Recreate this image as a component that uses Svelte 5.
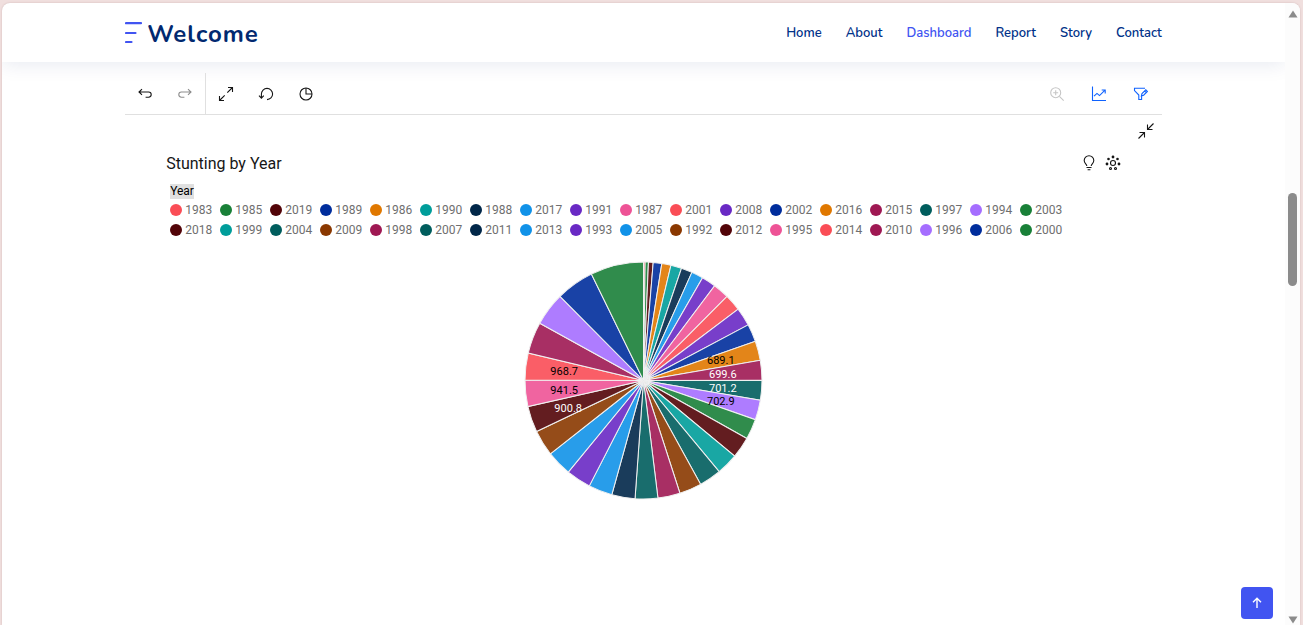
<script>
  const links = ['Home', 'About', 'Dashboard', 'Report', 'Story', 'Contact'];

  const coral = '#fa4d56';
  const green = '#198038';
  const maroon = '#520408';
  const navy = '#002d9c';
  const orange = '#e07800';
  const teal = '#009d9a';
  const ink = '#012749';
  const sky = '#1192e8';
  const purple = '#6929c4';
  const pink = '#ee5396';
  const magenta = '#9f1853';
  const pine = '#005d5d';
  const lilac = '#a56eff';
  const brown = '#8a3800';

  // year, colour, angle in degrees at which the slice ends (clockwise from the top)
  const slices = [
    ['1983', coral, 0.8], ['1985', green, 2.4], ['2019', maroon, 4.7], ['1989', navy, 8.9],
    ['1986', orange, 13.4], ['1990', teal, 18.7], ['1988', ink, 24.1], ['2017', sky, 29.9],
    ['1991', purple, 36.9], ['1987', pink, 44.8], ['2001', coral, 53], ['2008', purple, 62],
    ['2002', navy, 70.7], ['2016', orange, 80.2], ['2015', magenta, 89.9], ['1997', pine, 99.6],
    ['1994', lilac, 109.3], ['2003', green, 119.3], ['2018', maroon, 129.7], ['1999', teal, 140.3],
    ['2004', pine, 151.2], ['2009', brown, 162.1], ['1998', magenta, 173], ['2007', pine, 184.1],
    ['2011', ink, 195.5], ['2013', sky, 207.2], ['1993', purple, 219.4], ['2005', sky, 231.8],
    ['1992', brown, 244.5], ['2012', maroon, 257.3], ['1995', pink, 270.2], ['2014', coral, 283.4],
    ['2010', magenta, 298.9], ['1996', lilac, 315.2], ['2006', navy, 333.9], ['2000', green, 360]
  ];

  const labels = [
    { text: '689.1', x: 77, y: -16, dark: true },
    { text: '699.6', x: 79, y: -3, dark: false },
    { text: '701.2', x: 79, y: 11, dark: false },
    { text: '702.9', x: 77, y: 24, dark: true },
    { text: '900.8', x: -75, y: 31, dark: false },
    { text: '941.5', x: -79, y: 13, dark: true },
    { text: '968.7', x: -79, y: -5, dark: true }
  ];

  const R = 118;
  const point = (deg) => {
    const a = (deg * Math.PI) / 180;
    return `${(R * Math.sin(a)).toFixed(2)} ${(-R * Math.cos(a)).toFixed(2)}`;
  };
  const wedge = (i) => {
    const start = i === 0 ? 0 : slices[i - 1][2];
    return `M0 0L${point(start)}A${R} ${R} 0 0 1 ${point(slices[i][2])}Z`;
  };
</script>

<div class="window">
  <div class="page">
    <header>
      <a class="brand" href="#top">
        <svg width="18" height="22" viewBox="0 0 18 22" aria-hidden="true">
          <path d="M1 1.2H16M1 11H10.5M1 20H6.5" stroke="#4154f1" stroke-width="2.2" stroke-linecap="round" />
        </svg>
        <span>Welcome</span>
      </a>
      <nav>
        {#each links as link}
          <a href="#{link.toLowerCase()}" class:active={link === 'Dashboard'}>{link}</a>
        {/each}
      </nav>
    </header>

    <main>
      <div class="toolbar">
        <div class="group history">
          <button aria-label="Undo">
            <svg viewBox="0 0 16 16"><path d="M5 3.2L2 6L5 8.8M2 6H11.6a2.4 2.4 0 0 1 0 5.2H8.6" /></svg>
          </button>
          <button aria-label="Redo" class="muted">
            <svg viewBox="0 0 16 16"><path d="M11 3.2L14 6L11 8.8M14 6H4.4a2.4 2.4 0 0 0 0 5.2H7.4" /></svg>
          </button>
        </div>
        <div class="group">
          <button aria-label="Full screen">
            <svg viewBox="0 0 16 16"><path d="M10 1.5H14.5V6M14.5 1.5L9.3 6.7M6 14.5H1.5V10M1.5 14.5L6.7 9.3" /></svg>
          </button>
          <button aria-label="Reset">
            <svg viewBox="0 0 16 16"><path d="M3.4 12V8A5.6 5.6 0 1 1 9 13.6M1 9.6L3.4 12.2L5.8 9.6" /></svg>
          </button>
          <button aria-label="Data refresh">
            <svg viewBox="0 0 16 16"><circle cx="8" cy="8" r="6" /><path d="M8 2V8H14" /></svg>
          </button>
        </div>
        <div class="group tools">
          <button aria-label="Zoom in" class="disabled">
            <svg viewBox="0 0 16 16"><circle cx="6.7" cy="6.7" r="5" /><path d="M10.4 10.4L14.7 14.7M6.7 4.2V9.2M4.2 6.7H9.2" /></svg>
          </button>
          <button aria-label="Visualizations" class="blue">
            <svg viewBox="0 0 16 16"><path d="M1.5 .5V14.5H15M3 10.2L6 7.4L8.5 9.6L14 4.2M10.7 4H14.2V7.5" /></svg>
          </button>
          <button aria-label="Filters" class="blue">
            <svg viewBox="0 0 16 16"><path d="M12 2.2H1.5V4.6L5.8 9V13.5H8.6V10.6M8.4 10L9 7.6L12.8 3.8L14.4 5.4L10.6 9.2ZM11.6 5L13.2 6.6" /></svg>
          </button>
        </div>
      </div>

      <div class="collapse">
        <button aria-label="Collapse">
          <svg viewBox="0 0 16 16"><path d="M15.5 .5L9.5 6.5M9.5 1.5V6.5H14.5M.5 15.5L6.5 9.5M1.5 9.5H6.5V14.5" /></svg>
        </button>
      </div>

      <section class="chart">
        <div class="title">
          <h2>Stunting by Year</h2>
          <button aria-label="Insights">
            <svg viewBox="0 0 16 16"><path d="M5.8 11C5.8 9 3.2 8.6 3.2 5.6a4.8 4.8 0 0 1 9.6 0C12.8 8.6 10.2 9 10.2 11M5.5 12.5H10.5M6.6 14.8H9.4" /></svg>
          </button>
          <button aria-label="Related visualizations">
            <svg viewBox="0 0 16 16">
              <circle cx="8" cy="8" r="2.5" />
              <circle cx="5.5" cy="13.5" r="1" /><circle cx="10.5" cy="13.5" r="1" />
              <g class="solid">
                <circle cx="8" cy="2" r="1.4" /><circle cx="3.5" cy="4" r="1.3" /><circle cx="12.5" cy="4" r="1.3" />
                <circle cx="2" cy="9" r="1.4" /><circle cx="14" cy="9" r="1.4" />
              </g>
            </svg>
          </button>
        </div>

        <div class="legend">
          <h3>Year</h3>
          <ul>
            {#each slices as [year, color]}
              <li><svg viewBox="0 0 12 12"><circle cx="6" cy="6" r="6" fill={color} /></svg>{year}</li>
            {/each}
          </ul>
        </div>

        <svg class="pie" viewBox="-120 -120 240 240" role="img" aria-label="Stunting by Year">
          {#each slices as slice, i}
            <path d={wedge(i)} fill={slice[1]} />
          {/each}
          {#each labels as label}
            <text x={label.x} y={label.y} class:dark={label.dark}>{label.text}</text>
          {/each}
        </svg>
      </section>
    </main>
  </div>

  <div class="scrollbar" aria-hidden="true">
    <svg viewBox="0 0 10 8"><path d="M5 .5L9.5 7.5H.5Z" /></svg>
    <div class="track"><div class="thumb"></div></div>
    <svg viewBox="0 0 10 8"><path d="M5 7.5L9.5 .5H.5Z" /></svg>
  </div>
</div>

<a class="to-top" href="#top" aria-label="Back to top">
  <svg viewBox="0 0 16 16"><path d="M8 13V3.5M4 7.3L8 3.3L12 7.3" /></svg>
</a>

<style>
  :global(body) {
    background: #f0dfde;
  }
  .window {
    display: flex;
    box-sizing: border-box;
    height: calc(100vh - 3px);
    margin: 3px 3px 0 2px;
    overflow: hidden;
    background: #fff;
    border-radius: 8px 8px 0 0;
    box-shadow: 0 0 2px #cdb4b4;
    font-family: Roboto, sans-serif;
  }
  .page {
    flex: 1;
    min-width: 0;
    overflow: hidden;
  }
  header {
    display: flex;
    align-items: center;
    justify-content: space-between;
    height: 59px;
    padding: 0 9.6%;
    box-shadow: 0 2px 20px rgba(1, 41, 112, 0.1);
    font-family: Nunito, Lato, sans-serif;
  }
  a {
    text-decoration: none;
  }
  .brand {
    display: flex;
    align-items: center;
    gap: 4px;
    color: #012970;
    font-size: 24px;
    font-weight: 700;
    line-height: 32px;
    letter-spacing: 1px;
  }
  .brand span {
    padding-top: 2px;
  }
  nav {
    display: flex;
    gap: 24px;
    font-size: 13px;
    font-weight: 600;
  }
  nav a {
    color: #013289;
  }
  nav a.active {
    color: #4154f1;
  }
  main {
    padding: 11px 9.6% 0;
  }
  button {
    display: grid;
    place-items: center;
    padding: 0;
    border: 0;
    background: none;
    color: #161616;
  }
  button svg,
  .to-top svg {
    width: 16px;
    height: 16px;
    fill: none;
    stroke: currentColor;
    stroke-width: 1.1;
  }
  .solid {
    fill: currentColor;
    stroke: none;
  }
  .toolbar,
  .group {
    display: flex;
  }
  .toolbar {
    border-bottom: 1px solid #e0e0e0;
  }
  .group button {
    width: 40px;
    height: 41px;
  }
  .history {
    border-right: 1px solid #e0e0e0;
  }
  .tools {
    margin-left: auto;
  }
  .tools button {
    width: 42px;
  }
  button.muted {
    color: #8d8d8d;
  }
  button.disabled {
    color: #c6c6c6;
  }
  button.blue {
    color: #0f62fe;
  }
  .collapse {
    display: flex;
    justify-content: flex-end;
    padding: 8px 8px 0;
  }
  .chart {
    padding: 12px 41px 0;
  }
  .title {
    display: flex;
    align-items: center;
    gap: 8px;
    height: 24px;
  }
  h2 {
    flex: 1;
    margin: 0;
    color: #161616;
    font-size: 16px;
    font-weight: 400;
  }
  .legend {
    padding: 9px 4px 0;
  }
  h3 {
    width: fit-content;
    margin: 0 0 1px;
    background: #e0e0e0;
    color: #000;
    font-size: 12px;
    font-weight: 400;
    line-height: 15px;
  }
  ul {
    display: grid;
    grid-template-columns: repeat(18, 50px);
    margin: 0;
    padding: 0;
    list-style: none;
    color: #6f6f6f;
    font-size: 12px;
    line-height: 20px;
  }
  li {
    display: flex;
    align-items: center;
    gap: 3px;
  }
  li svg {
    width: 12px;
    height: 12px;
  }
  .pie {
    display: block;
    width: 241px;
    margin: 20px auto 0;
  }
  .pie path {
    fill-opacity: 0.9;
    stroke: #f0f0f0;
    stroke-width: 1;
  }
  .pie text {
    fill: #fff;
    font-size: 11px;
    text-anchor: middle;
  }
  .pie text.dark {
    fill: #000;
  }
  .scrollbar {
    display: flex;
    flex-direction: column;
    align-items: center;
    width: 15px;
    padding: 7px 0 1px;
    box-sizing: border-box;
    background: #fcfcfc;
  }
  .scrollbar svg {
    width: 10px;
    height: 8px;
    fill: #8b8b8b;
  }
  .track {
    flex: 1;
    width: 9px;
  }
  .thumb {
    height: 93px;
    margin-top: 175px;
    border-radius: 5px;
    background: #8b8b8b;
  }
  .to-top {
    position: fixed;
    right: 30px;
    bottom: 6px;
    display: grid;
    place-items: center;
    width: 32px;
    height: 32px;
    border-radius: 4px;
    background: #4154f1;
    color: #fff;
  }
  .to-top svg {
    stroke-width: 1.4;
  }
</style>
